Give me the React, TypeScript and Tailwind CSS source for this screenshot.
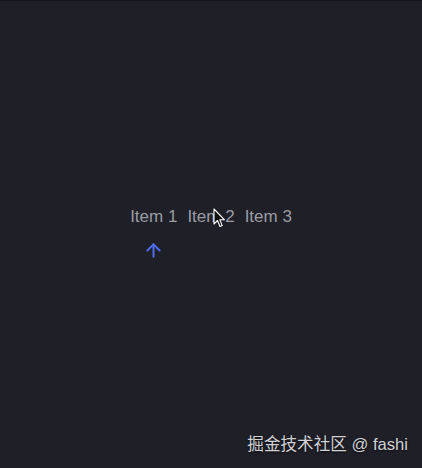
import { ArrowUp } from 'lucide-react'

export default function App() {
  return (
    <div
      className="relative w-full h-[468px] bg-[#1e1f27] border-t border-[#14141b] overflow-hidden flex items-center justify-center"
      style={{ fontFamily: '"Liberation Sans", Arial, sans-serif' }}
    >
      <div className="flex flex-col items-start -mt-[2px]">
        <ul className="flex gap-[10px] text-[17px] text-[#9b9ca4] leading-[20px]">
          {['Item 1', 'Item 2', 'Item 3'].map(t => (
            <li key={t}>{t}</li>
          ))}
        </ul>
        <div className="w-[47px] flex justify-center mt-[13px]">
          <ArrowUp size={21} strokeWidth={2.3} className="text-[#4e6cf2]" />
        </div>
      </div>

      {/* mouse cursor */}
      <svg className="absolute left-[213px] top-[207px]" width="13" height="20" viewBox="0 0 13 20">
        <path d="M1 1 L1 16 L4.5 12.5 L7 18.5 L9.2 17.6 L6.8 11.8 L11.5 11.8 Z" fill="#111" stroke="#fff" strokeWidth="1.1" strokeLinejoin="round" />
      </svg>

      <div
        className="absolute right-[14px] bottom-[13px] text-[16.6px] text-[#d2d2d5] leading-[20px]"
        style={{ fontFamily: '"Liberation Sans", "Noto Sans CJK SC", sans-serif', textShadow: '0 1px 2px rgba(0,0,0,0.6)' }}
      >
        掘金技术社区 @ fashi
      </div>
    </div>
  )
}
